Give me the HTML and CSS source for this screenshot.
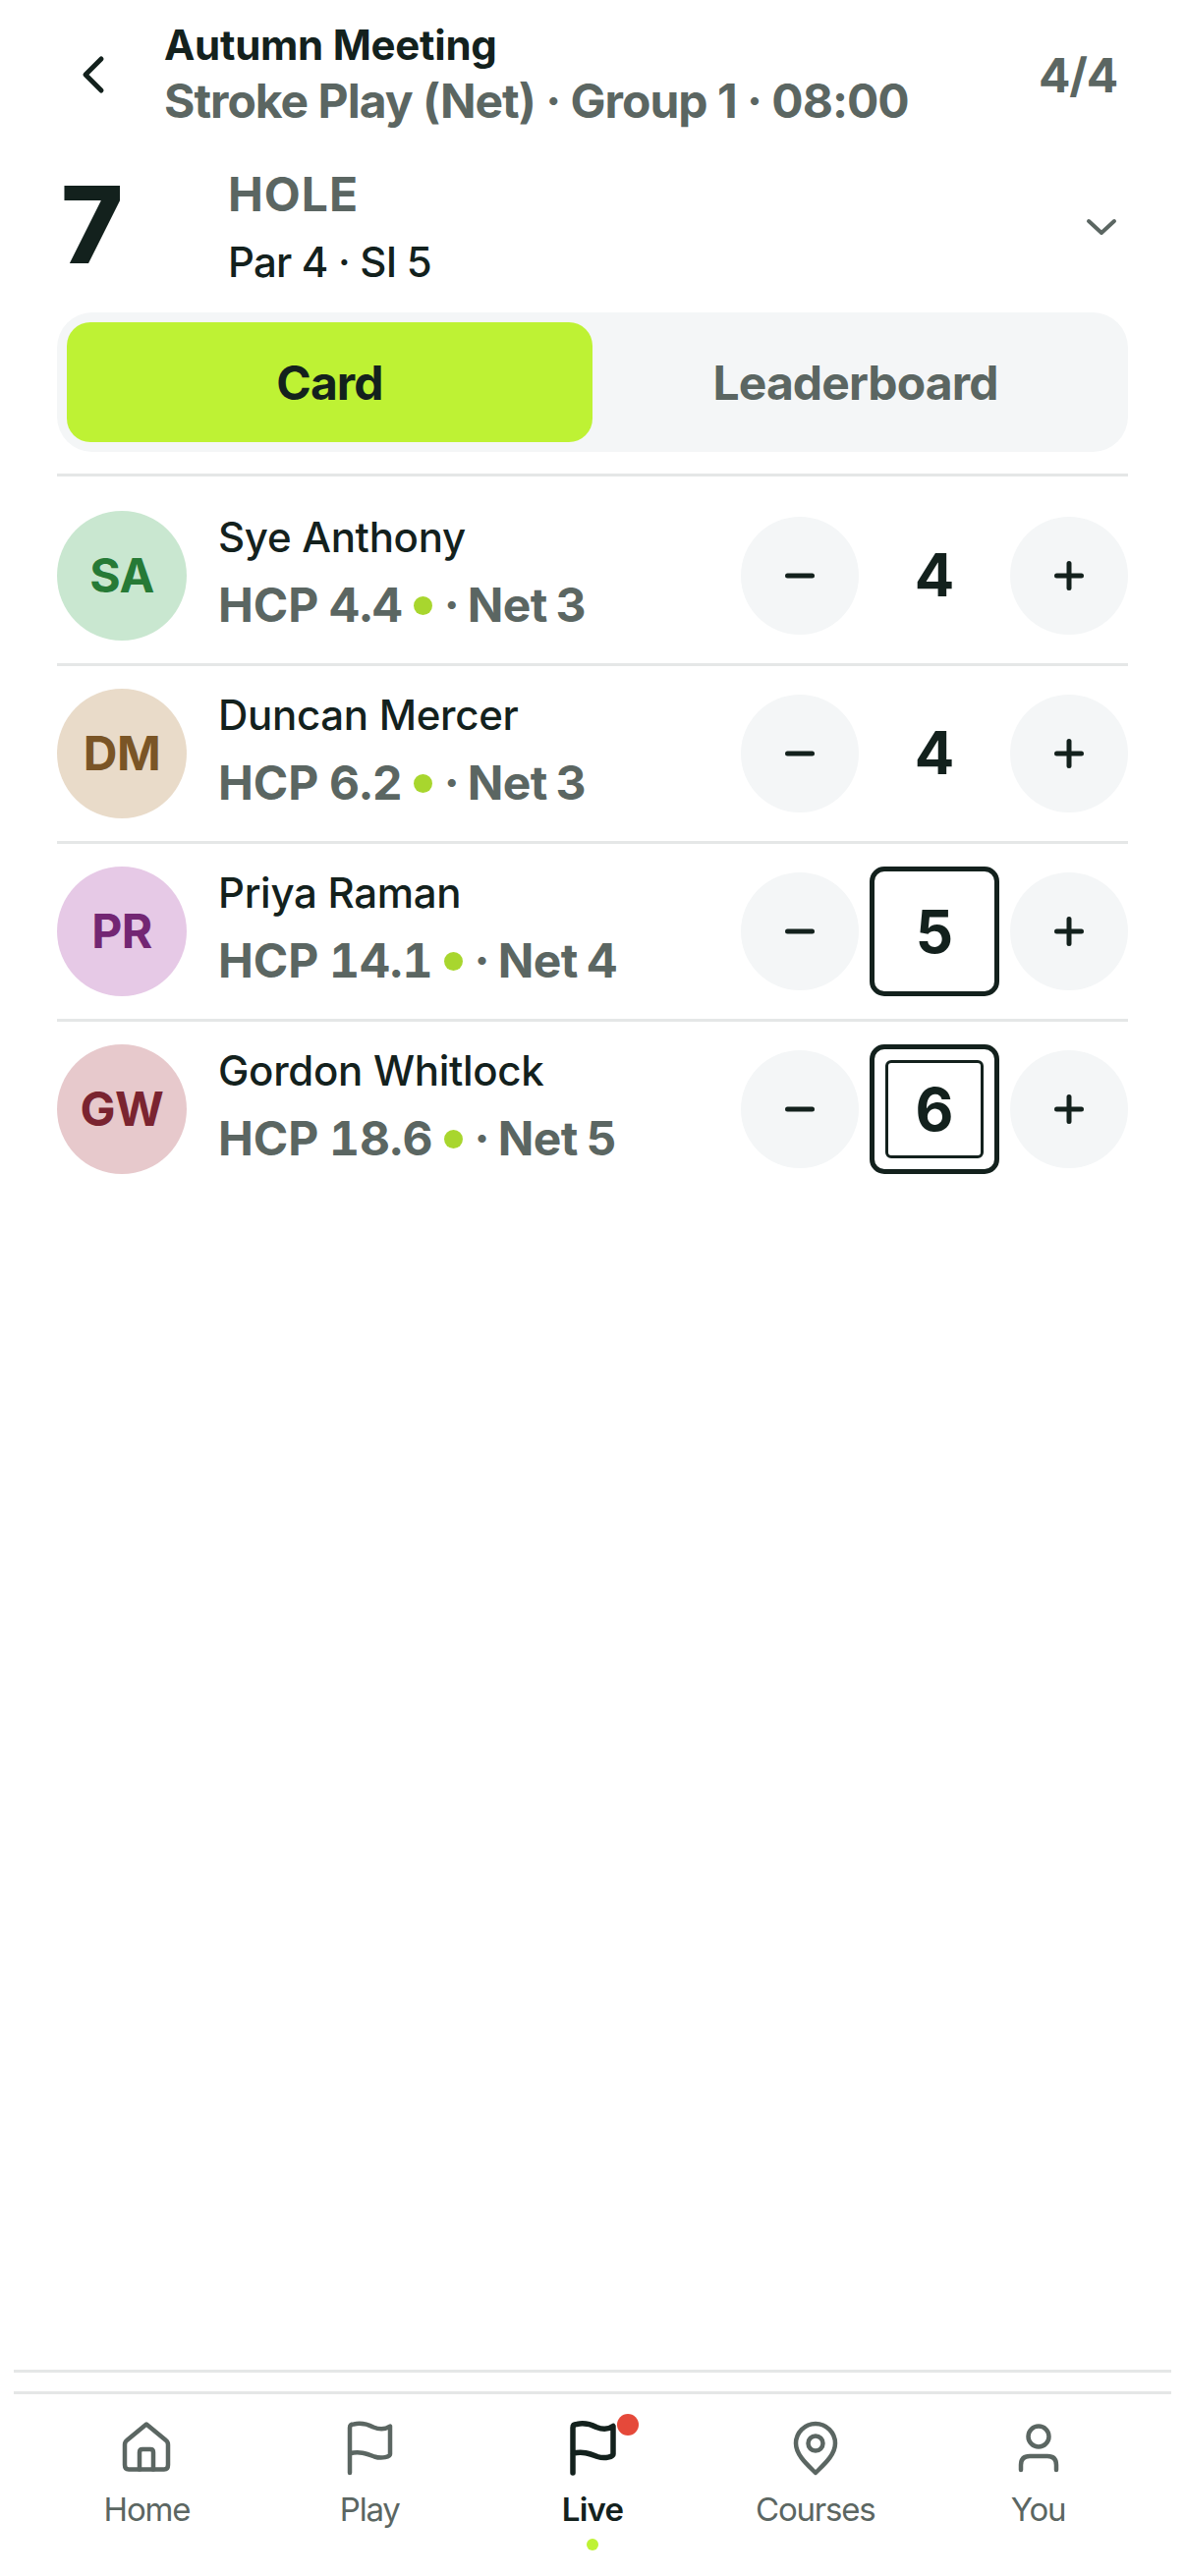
FILE: index.html
```html
<!DOCTYPE html>
<html lang="en">
<head>
  <meta charset="UTF-8" />
  <meta name="viewport" content="width=device-width, initial-scale=1" />
  <title>Autumn Meeting - Live</title>
  <link rel="stylesheet" href="styles.css">
</head>
<body>
  <!-- Header -->
  <header class="top-bar">
    <button class="back-btn" aria-label="Back">
      <svg width="66" height="66" viewBox="0 0 66 66"><path class="stroke-dark" d="M43 17 L27 33 L43 49" /></svg>
    </button>
    <div class="top-titles">
      <div class="event-name">Autumn Meeting</div>
      <div class="event-meta">Stroke Play (Net) · Group 1 · 08:00</div>
    </div>
    <div class="top-count">4/4</div>
  </header>

  <!-- Hole -->
  <section class="hole-row">
    <div class="hole-number">7</div>
    <div class="hole-info">
      <div class="hole-label">HOLE</div>
      <div class="hole-par">Par 4 · SI 5</div>
    </div>
    <svg class="hole-chevron" width="32" height="18" viewBox="0 0 32 18"><path d="M3 3 L16 15 L29 3" /></svg>
  </section>

  <!-- Tabs -->
  <div class="tabs">
    <div class="tab tab-active">Card</div>
    <div class="tab">Leaderboard</div>
  </div>
  <div class="rule"></div>

  <!-- Players -->
  <section class="players">
    <div class="player">
      <div class="avatar avatar-green">SA</div>
      <div class="player-info">
        <div class="player-name">Sye Anthony</div>
        <div class="player-meta"><span class="hcp">HCP 4.4</span><span class="stroke-dot"></span>· Net 3</div>
      </div>
      <div class="stepper">
        <button class="step-btn" aria-label="Minus"><svg width="30" height="30" viewBox="0 0 30 30"><path d="M2.5 15 H27.5" /></svg></button>
        <div class="score">4</div>
        <button class="step-btn" aria-label="Plus"><svg width="30" height="30" viewBox="0 0 30 30"><path d="M2.5 15 H27.5 M15 2.5 V27.5" /></svg></button>
      </div>
    </div>

    <div class="player">
      <div class="avatar avatar-tan">DM</div>
      <div class="player-info">
        <div class="player-name">Duncan Mercer</div>
        <div class="player-meta"><span class="hcp">HCP 6.2</span><span class="stroke-dot"></span>· Net 3</div>
      </div>
      <div class="stepper">
        <button class="step-btn" aria-label="Minus"><svg width="30" height="30" viewBox="0 0 30 30"><path d="M2.5 15 H27.5" /></svg></button>
        <div class="score">4</div>
        <button class="step-btn" aria-label="Plus"><svg width="30" height="30" viewBox="0 0 30 30"><path d="M2.5 15 H27.5 M15 2.5 V27.5" /></svg></button>
      </div>
    </div>

    <div class="player">
      <div class="avatar avatar-purple">PR</div>
      <div class="player-info">
        <div class="player-name">Priya Raman</div>
        <div class="player-meta"><span class="hcp">HCP 14.1</span><span class="stroke-dot"></span>· Net 4</div>
      </div>
      <div class="stepper">
        <button class="step-btn" aria-label="Minus"><svg width="30" height="30" viewBox="0 0 30 30"><path d="M2.5 15 H27.5" /></svg></button>
        <div class="score score-bogey">5</div>
        <button class="step-btn" aria-label="Plus"><svg width="30" height="30" viewBox="0 0 30 30"><path d="M2.5 15 H27.5 M15 2.5 V27.5" /></svg></button>
      </div>
    </div>

    <div class="player">
      <div class="avatar avatar-red">GW</div>
      <div class="player-info">
        <div class="player-name">Gordon Whitlock</div>
        <div class="player-meta"><span class="hcp">HCP 18.6</span><span class="stroke-dot"></span>· Net 5</div>
      </div>
      <div class="stepper">
        <button class="step-btn" aria-label="Minus"><svg width="30" height="30" viewBox="0 0 30 30"><path d="M2.5 15 H27.5" /></svg></button>
        <div class="score score-bogey"><span class="score-inner">6</span></div>
        <button class="step-btn" aria-label="Plus"><svg width="30" height="30" viewBox="0 0 30 30"><path d="M2.5 15 H27.5 M15 2.5 V27.5" /></svg></button>
      </div>
    </div>
  </section>

  <!-- Bottom nav -->
  <footer class="bottom">
    <div class="bottom-rule"></div>
    <nav class="nav">
      <div class="nav-item">
        <svg class="nav-icon" width="66" height="66" viewBox="0 0 66 66">
          <path d="M33 8.5 L53 25 Q55 26.5 55 29.5 V50 Q55 54.5 51 54.5 H15 Q11 54.5 11 50 V29.5 Q11 26.5 13 25 Z" />
          <path d="M26 54.5 V37 Q26 34 29 34 H37 Q40 34 40 37 V54.5" />
        </svg>
        <span>Home</span>
      </div>
      <div class="nav-item">
        <svg class="nav-icon" width="66" height="66" viewBox="0 0 66 66">
          <path d="M13 58 V12 Q13 8.5 17 8.5 C26 6.5 32 9 37 11.5 C43 14 49 14 54 10.5 V39 C54 41.5 46 44 38 41.5 C30 38.5 22 35.5 13 38.5" />
        </svg>
        <span>Play</span>
      </div>
      <div class="nav-item nav-active">
        <svg class="nav-icon" width="66" height="66" viewBox="0 0 66 66">
          <path d="M13 58 V12 Q13 8.5 17 8.5 C26 6.5 32 9 37 11.5 C43 14 49 14 54 10.5 V39 C54 41.5 46 44 38 41.5 C30 38.5 22 35.5 13 38.5" />
        </svg>
        <span class="nav-badge"></span>
        <span>Live</span>
        <span class="nav-dot"></span>
      </div>
      <div class="nav-item">
        <svg class="nav-icon" width="66" height="66" viewBox="0 0 66 66">
          <path d="M33 8 C22 8 13 17 13 28 C13 40 25 50 33 58 C41 50 53 40 53 28 C53 17 44 8 33 8 Z" />
          <circle cx="33" cy="28" r="7.5" />
        </svg>
        <span>Courses</span>
      </div>
      <div class="nav-item">
        <svg class="nav-icon" width="66" height="66" viewBox="0 0 66 66">
          <circle cx="33" cy="21" r="10.5" />
          <path d="M15 55 V50 Q15 41 24 41 H42 Q51 41 51 50 V55" />
        </svg>
        <span>You</span>
      </div>
    </nav>
  </footer>
</body>
</html>
```

FILE: styles.css
```css
body {
  font-family: Inter, "Liberation Sans", sans-serif;
  background: #fff;
  color: #13211d;
  margin: 0;
  min-height: 100vh;
  display: flex;
  flex-direction: column;
  box-sizing: border-box;
}
button {
  border: none;
  background: none;
  padding: 0;
}
/* Header */
.top-bar {
  display: flex;
  align-items: center;
  padding: 19px 69px 0 60px;
}
.back-btn {
  width: 66px;
  height: 66px;
  margin-right: 41px;
}
.stroke-dark {
  fill: none;
  stroke: #13211d;
  stroke-width: 5;
  stroke-linecap: round;
  stroke-linejoin: round;
}
.top-titles {
  flex: 1;
}
.event-name {
  font-size: 42px;
  line-height: 54px;
  font-weight: 700;
  letter-spacing: -0.25px;
}
.event-meta {
  font-size: 48px;
  line-height: 60px;
  font-weight: 650;
  letter-spacing: -1px;
  color: #5b6662;
}
.top-count {
  font-size: 48px;
  font-weight: 650;
  letter-spacing: -1.2px;
  color: #5b6662;
}
/* Hole */
.hole-row {
  display: flex;
  align-items: center;
  padding: 35px 69px 0 62px;
}
.hole-number {
  width: 170px;
  font-size: 108px;
  line-height: 104px;
  font-weight: 800;
  margin-bottom: 4px;
}
.hole-info {
  flex: 1;
  display: flex;
  flex-direction: column;
  gap: 12px;
}
.hole-label {
  font-size: 48px;
  line-height: 60px;
  font-weight: 650;
  letter-spacing: 1px;
  color: #5b6662;
}
.hole-par {
  font-size: 42px;
  line-height: 54px;
  font-weight: 550;
  letter-spacing: -0.8px;
}
.hole-chevron path {
  fill: none;
  stroke: #5b6662;
  stroke-width: 4;
  stroke-linecap: round;
  stroke-linejoin: round;
}
/* Tabs */
.tabs {
  display: flex;
  margin: 24px 58px 0;
  padding: 10px;
  height: 142px;
  box-sizing: border-box;
  background: #f4f6f7;
  border-radius: 36px;
}
.tab {
  flex: 1;
  display: flex;
  align-items: center;
  justify-content: center;
  border-radius: 24px;
  font-size: 48px;
  font-weight: 650;
  letter-spacing: -0.9px;
  color: #5b6662;
}
.tab-active {
  background: #bef234;
  color: #13211d;
  font-weight: 700;
}
.rule {
  height: 3px;
  margin: 22px 58px 0;
  background: #e5e7e7;
}
/* Players */
.players {
  margin: 12px 58px 0;
}
.player {
  display: flex;
  align-items: center;
  padding: 23px 0;
  border-bottom: 3px solid #e5e7e7;
}
.player:last-child {
  border-bottom: none;
}
.avatar {
  width: 132px;
  height: 132px;
  box-sizing: border-box;
  padding-bottom: 2px;
  border-radius: 50%;
  display: flex;
  align-items: center;
  justify-content: center;
  font-size: 48px;
  font-weight: 700;
  letter-spacing: -0.5px;
  margin-right: 32px;
  flex-shrink: 0;
}
.avatar-green {
  background: #c9e7d0;
  color: #267a36;
}
.avatar-tan {
  background: #e9dbc9;
  color: #7a5526;
}
.avatar-purple {
  background: #e6c9e6;
  color: #732673;
}
.avatar-red {
  background: #e7c9cc;
  color: #7a2430;
}
.player-info {
  flex: 1;
  padding-bottom: 6px;
}
.player-name {
  font-size: 42px;
  line-height: 54px;
  font-weight: 550;
  letter-spacing: -0.3px;
  margin-bottom: 12px;
}
.player-meta {
  display: flex;
  align-items: center;
  font-size: 48px;
  line-height: 60px;
  font-weight: 650;
  letter-spacing: -0.6px;
  word-spacing: -2px;
  color: #5b6662;
}
.hcp {
  font-variant-numeric: tabular-nums;
  letter-spacing: -0.1px;
}
.stroke-dot {
  width: 19px;
  height: 19px;
  border-radius: 50%;
  background: #a8d62e;
  margin: 0 12px 0 11px;
}
.stepper {
  display: flex;
  align-items: center;
  gap: 11px;
}
.step-btn {
  width: 120px;
  height: 120px;
  border-radius: 50%;
  background: #f4f6f7;
  display: flex;
  align-items: center;
  justify-content: center;
}
.step-btn path {
  fill: none;
  stroke: #13211d;
  stroke-width: 5;
  stroke-linecap: round;
}
.score {
  width: 132px;
  height: 132px;
  box-sizing: border-box;
  padding-bottom: 2px;
  display: flex;
  align-items: center;
  justify-content: center;
  font-size: 60px;
  font-weight: 700;
}
.score-bogey {
  border: 5px solid #13211d;
  border-radius: 15px;
  padding-bottom: 0;
}
.score-inner {
  width: 100px;
  height: 100px;
  box-sizing: border-box;
  display: flex;
  align-items: center;
  justify-content: center;
  border: 3px solid #13211d;
  border-radius: 6px;
}
/* Bottom nav */
.bottom {
  margin: auto 14px 0;
}
.bottom-rule {
  height: 3px;
  background: #e5e7e7;
}
.nav {
  margin-top: 19px;
  height: 188px;
  box-sizing: border-box;
  border-top: 3px solid #e5e7e7;
  padding: 22px 22px 0;
  display: grid;
  grid-template-columns: repeat(5, 1fr);
}
.nav-item {
  position: relative;
  display: flex;
  flex-direction: column;
  align-items: center;
  font-size: 33px;
  line-height: 42px;
  letter-spacing: -1.2px;
  color: #5b6662;
}
.nav-icon {
  margin-bottom: 8px;
}
.nav-icon path,
.nav-icon circle {
  fill: none;
  stroke: #5b6662;
  stroke-width: 4.5;
  stroke-linecap: round;
  stroke-linejoin: round;
}
.nav-active {
  color: #13211d;
  font-weight: 600;
  letter-spacing: -0.8px;
}
.nav-active .nav-icon path {
  stroke: #13211d;
  stroke-width: 5.5;
}
.nav-badge {
  position: absolute;
  top: -2px;
  left: 50%;
  margin-left: 25px;
  width: 22px;
  height: 22px;
  border-radius: 50%;
  background: #e5493a;
}
.nav-dot {
  width: 12px;
  height: 12px;
  border-radius: 50%;
  background: #bef234;
  margin-top: 9px;
}
```
